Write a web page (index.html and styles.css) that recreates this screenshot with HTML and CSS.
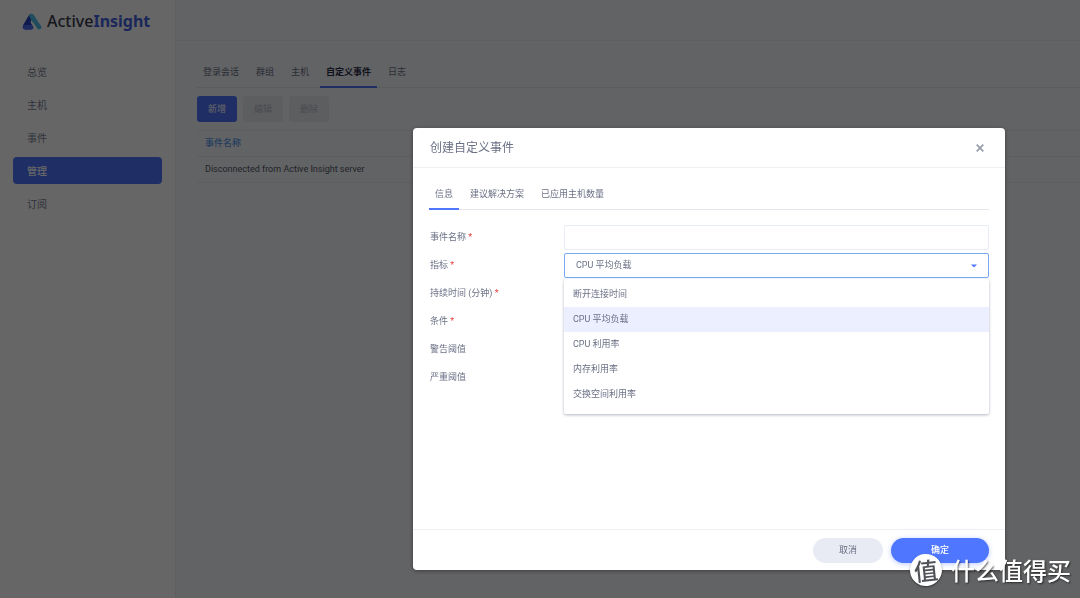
FILE: index.html
```html
<!DOCTYPE html>
<html lang="zh-CN">
<head>
<meta charset="utf-8">
<meta name="viewport" content="width=device-width, initial-scale=1">
<title>ActiveInsight</title>
<link rel="stylesheet" href="styles.css">
</head>
<body>
<div class="app">
  <aside class="sidebar">
    <div class="logo">
      <svg class="logo-mark" viewBox="0 0 20 17" aria-hidden="true">
        <path d="M9.500 3 L17.200 14.200" stroke="#4fc0ea" stroke-width="4.500" stroke-linecap="round"/>
        <path d="M9.300 0.900 Q7.800 0.900 6.800 2.500 L1.200 12 Q-0.200 16.200 3.200 16.500 H9 Q11.500 16 11 14 L8.500 9 L11.500 3 Q11 1 9.300 0.900 Z" fill="#2340c4"/>
        <path d="M9.500 3 L12 7" stroke="#4fc0ea" stroke-width="4.500" stroke-linecap="round"/>
        <path d="M3 14.300 H9" stroke="#4a6cf5" stroke-width="4.400" stroke-linecap="round"/>
      </svg>
      <span class="logo-text">Active<b>Insight</b></span>
    </div>
    <nav class="nav">
      <a class="nav-item" href="#">总览</a>
      <a class="nav-item" href="#">主机</a>
      <a class="nav-item" href="#">事件</a>
      <a class="nav-item nav-item-active" href="#">管理</a>
      <a class="nav-item" href="#">订阅</a>
    </nav>
  </aside>
  <div class="content">
    <header class="topbar"></header>
    <main class="main">
      <div class="tabs main-tabs">
        <button class="tab">登录会话</button>
        <button class="tab">群组</button>
        <button class="tab">主机</button>
        <button class="tab tab-active tab-strong">自定义事件</button>
        <button class="tab">日志</button>
      </div>
      <div class="toolbar">
        <button class="tool tool-primary">新增</button>
        <button class="tool" disabled>编辑</button>
        <button class="tool" disabled>删除</button>
      </div>
      <table class="table">
        <thead><tr><th>事件名称</th></tr></thead>
        <tbody><tr><td>Disconnected from Active Insight server</td></tr></tbody>
      </table>
    </main>
  </div>
</div>

<div class="overlay">
  <section class="modal" role="dialog" aria-labelledby="modal-title">
    <header class="modal-header">
      <h1 class="modal-title" id="modal-title">创建自定义事件</h1>
      <button class="close" aria-label="关闭">
        <svg class="close-icon" viewBox="0 0 8 8" aria-hidden="true"><path d="M0.700 0.700 L7.300 7.300 M7.300 0.700 L0.700 7.300" stroke="#9a9eab" stroke-width="1.800"/></svg>
      </button>
    </header>
    <div class="modal-body">
      <div class="tabs">
        <button class="tab tab-active">信息</button>
        <button class="tab">建议解决方案</button>
        <button class="tab">已应用主机数量</button>
      </div>
      <form class="form" id="event-form">
        <div class="row">
          <label class="label" for="name">事件名称 <span class="required">*</span></label>
          <input class="field" id="name" type="text">
        </div>
        <div class="row">
          <label class="label" for="metric">指标 <span class="required">*</span></label>
          <div class="select-wrap">
            <select class="field field-focus" id="metric">
              <option>断开连接时间</option>
              <option selected>CPU 平均负载</option>
              <option>CPU 利用率</option>
              <option>内存利用率</option>
              <option>交换空间利用率</option>
            </select>
            <svg class="caret" viewBox="0 0 6 4" aria-hidden="true"><path d="M0 0.500 H6 L3 3.500 Z" fill="#4f76ff"/></svg>
            <ul class="menu" role="listbox">
              <li class="menu-item" role="option">断开连接时间</li>
              <li class="menu-item menu-item-active" role="option" aria-selected="true">CPU 平均负载</li>
              <li class="menu-item" role="option">CPU 利用率</li>
              <li class="menu-item" role="option">内存利用率</li>
              <li class="menu-item" role="option">交换空间利用率</li>
            </ul>
          </div>
        </div>
        <div class="row"><span class="label">持续时间 (分钟) <span class="required">*</span></span></div>
        <div class="row"><span class="label">条件 <span class="required">*</span></span></div>
        <div class="row"><span class="label">警告阈值</span></div>
        <div class="row"><span class="label">严重阈值</span></div>
      </form>
    </div>
    <footer class="modal-footer">
      <button class="pill">取消</button>
      <button class="pill pill-primary" type="submit" form="event-form">确定</button>
    </footer>
  </section>
</div>

<div class="watermark">
  <span class="watermark-badge">值</span>
  <span class="watermark-text">什么值得买</span>
</div>
</body>
</html>
```
FILE: styles.css
```css
* {
  box-sizing: border-box;
}

body {
  margin: 0;
  font: 9px/15px Roboto, "Noto Sans CJK SC", sans-serif;
  color: #6b7085;
}

button,
input,
select {
  font: inherit;
  color: inherit;
  margin: 0;
  border: 0;
  background: none;
}

.app {
  display: flex;
  min-height: 100vh;
  background: #f6f7fb;
}

.sidebar {
  flex: 0 0 176px;
  background: #fff;
  border-right: 1px solid #ecedf2;
}

.logo {
  display: flex;
  align-items: center;
  gap: 5px;
  height: 42px;
  padding-left: 22px;
}

.logo-mark {
  width: 20px;
  height: 17px;
  fill: none;
}

.logo-text {
  font: 500 16px/20px "Noto Sans", "Open Sans", sans-serif;
  color: #3a3c4c;
}

.logo-text b {
  font-weight: 700;
  color: #4463e0;
}

.nav {
  display: grid;
  gap: 6px;
  padding: 16px 13px;
}

.nav-item {
  height: 27px;
  padding-left: 14px;
  border-radius: 4px;
  font-size: 10px;
  line-height: 29px;
  color: #7b8095;
  text-decoration: none;
}

.nav-item-active {
  background: #4f76ff;
  color: #fff;
  font-weight: 500;
}

.content {
  flex: 1;
  min-width: 0;
}

.topbar {
  height: 41px;
  border-bottom: 1px solid #ecedf2;
}

.main {
  padding: 14px 0 0 21px;
}

.tabs {
  display: flex;
  gap: 5px;
  border-bottom: 1px solid #e4e6ec;
}

.tab {
  height: 33px;
  margin-bottom: -1px;
  padding: 4px 6px 0;
  border-bottom: 2px solid transparent;
}

.tab-active {
  border-bottom-color: #4f76ff;
}

.tab-strong {
  color: #2c2e4a;
  font-weight: 700;
}

.toolbar {
  display: flex;
  gap: 6px;
  padding: 8px 0;
}

.tool {
  width: 40px;
  height: 26px;
  padding: 0;
  border-radius: 3px;
  background: #e9eaee;
  color: #b9bcc6;
}

.tool-primary {
  background: #4f76ff;
  color: #fff;
}

.table {
  width: 100%;
  border-collapse: collapse;
}

.table th,
.table td {
  height: 26px;
  padding: 0 8px;
  border-top: 1px solid #e9eaef;
  border-bottom: 1px solid #e9eaef;
  text-align: left;
  font-weight: 400;
  color: #54576a;
}

.table th {
  color: #5b9bee;
  font-weight: 500;
}

.overlay {
  position: fixed;
  inset: 0;
  display: flex;
  justify-content: flex-end;
  padding: 128px 75px 28px 16px;
  background: rgba(0, 0, 0, 0.6);
}

.modal {
  display: flex;
  flex-direction: column;
  width: 100%;
  max-width: 592px;
  border-radius: 4px;
  background: #fff;
  box-shadow: 0 1px 4px rgba(0, 0, 0, 0.4);
}

.modal-header {
  display: flex;
  align-items: center;
  justify-content: space-between;
  height: 40px;
  padding: 0 17px;
  border-bottom: 1px solid #eeeff2;
}

.modal-title {
  margin: 0;
  font-size: 12px;
  line-height: 18px;
  font-weight: 400;
}

.close {
  display: grid;
  place-items: center;
  width: 16px;
  height: 16px;
  padding: 0;
}

.close-icon {
  width: 8px;
  height: 8px;
}

.modal-body {
  flex: 1;
  padding: 9px 16px;
}

.form {
  display: grid;
  gap: 3px;
  padding-top: 15px;
}

.row {
  display: grid;
  grid-template-columns: 135px 1fr;
  align-items: center;
  min-height: 25px;
}

.label {
  padding-left: 1px;
}

.required {
  color: #e84545;
}

.field {
  display: block;
  width: 100%;
  height: 25px;
  padding: 0 11px;
  border: 1px solid #e8ecf3;
  border-radius: 2px;
  background: #fff;
  appearance: none;
  outline: 0;
}

.field-focus {
  border-color: #76a9f2;
}

.select-wrap {
  position: relative;
}

.caret {
  position: absolute;
  top: 11px;
  right: 12px;
  width: 6px;
  height: 4px;
}

.menu {
  position: absolute;
  top: 100%;
  left: 0;
  right: 0;
  margin: 1px 0 0;
  padding: 3px 0 7px;
  border-radius: 2px;
  background: #fff;
  box-shadow: 0 1px 3px rgba(60, 70, 100, 0.4);
  list-style: none;
}

.menu-item {
  padding: 5px 9px;
}

.menu-item-active {
  background: #ebefff;
}

.modal-footer {
  display: flex;
  justify-content: flex-end;
  gap: 8px;
  padding: 8px 16px 7px;
  border-top: 1px solid #eeeff2;
}

.pill {
  min-width: 70px;
  height: 25px;
  border-radius: 13px;
  background: #e8ebf3;
}

.pill-primary {
  min-width: 98px;
  background: #4f76ff;
  color: #fff;
  font-weight: 500;
  box-shadow: 0 1px 5px rgba(79, 118, 255, 0.4);
}

.watermark {
  position: fixed;
  right: 9px;
  bottom: 11px;
  display: flex;
  align-items: center;
  gap: 9px;
  color: #fff;
}

.watermark-badge {
  width: 32px;
  height: 32px;
  border-radius: 50%;
  background: #fff;
  box-shadow: 0 1px 2px rgba(0, 0, 0, 0.5);
  color: #505258;
  font: 500 24px/31px "Noto Sans CJK SC", sans-serif;
  text-align: center;
  transform: rotate(-6deg);
}

.watermark-text {
  font: 500 24px/34px "Noto Sans CJK SC", sans-serif;
  text-shadow: 1px 1px 2px rgba(0, 0, 0, 0.6);
}
```
